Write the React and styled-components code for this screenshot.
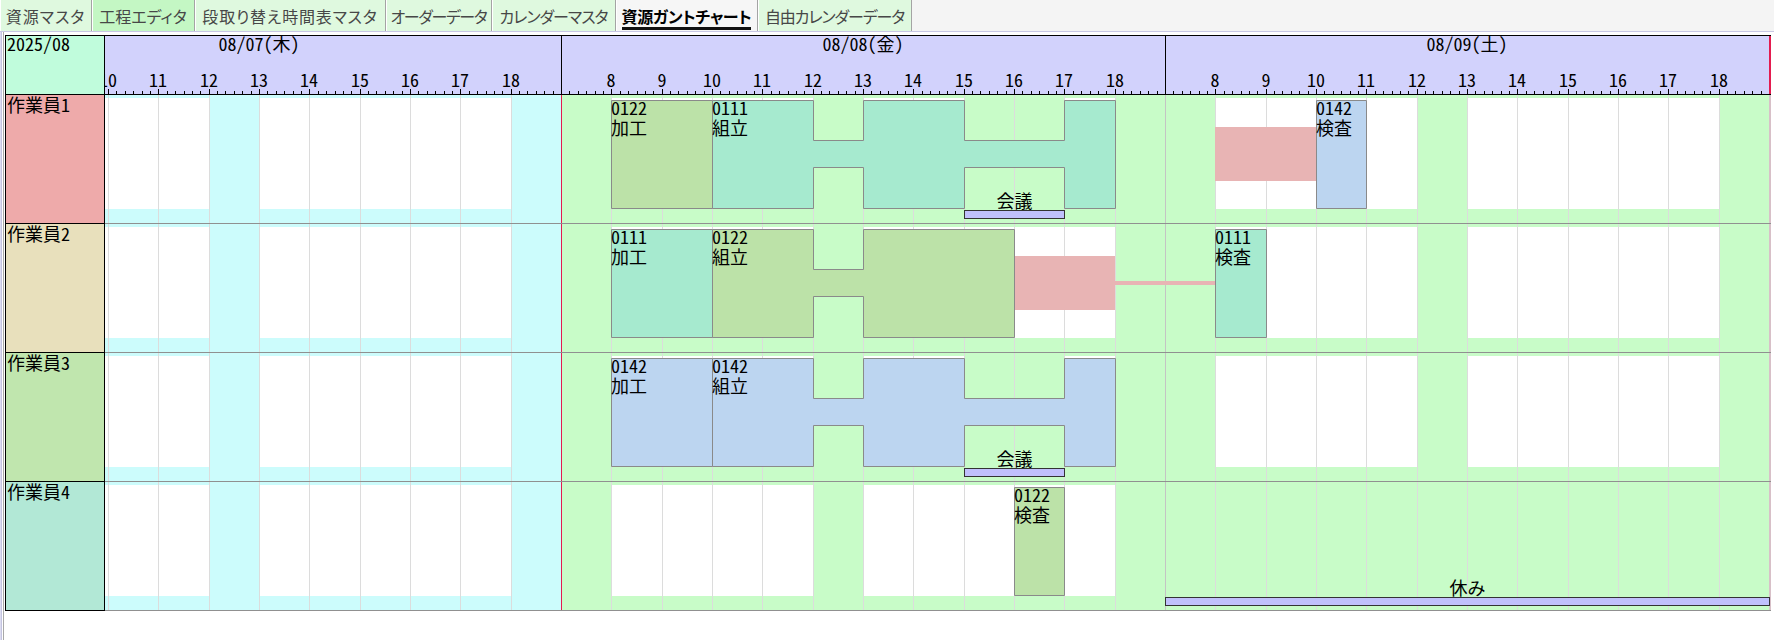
import React from 'react';
import styled, { createGlobalStyle } from 'styled-components';

const DAY_W = 604;
const X = (h) => Math.round(((h - 7) * DAY_W) / 12);
const SCROLL = 148;
const TASK_H = 109;

const C = {
  olive: '#bce2a8',
  teal: '#a6eacf',
  blue: '#bcd5f0',
  pink: '#e8b4b4',
  green: '#c8fcc8',
  cyan: '#ccfcfc',
  lav: '#d2d2fc',
  mint: '#c0fcdc',
  bar: '#c0c0fc',
  red: '#e41b4f',
};

const GlobalStyle = createGlobalStyle`
  html, body { margin: 0; padding: 0; background: #fff; }
  body {
    width: 1774px; height: 640px; overflow: hidden;
    font-family: "Noto Sans CJK JP", "Noto Sans", sans-serif;
    color: #000;
  }
  * { box-sizing: border-box; }
`;

const TabBar = styled.div`
  display: flex;
  height: 31px;
  background: #f4f4f4;
`;

const Tab = styled.div`
  width: ${(p) => p.$w}px;
  height: 31px;
  display: flex;
  align-items: center;
  justify-content: center;
  border-right: 1px solid #a4a4a4;
  box-shadow: inset 1px 0 0 #ffffff;
  background: ${(p) => (p.$tone === 'hot' ? '#c4f7c4' : p.$tone === 'sel' ? '#f6f6f6' : '#dff9df')};
  color: ${(p) => (p.$tone === 'sel' ? '#000' : '#474747')};
  font-size: 16px;
  font-feature-settings: "palt";
  letter-spacing: ${(p) => p.$ls || 0}px;
  font-weight: ${(p) => (p.$tone === 'sel' ? 700 : 400)};
  white-space: nowrap;
  overflow: hidden;
`;

const TabLabel = styled.span`
  line-height: 18px;
  padding-top: ${(p) => (p.$sel ? 5 : 0)}px;
  padding-bottom: ${(p) => (p.$sel ? 2 : 0)}px;
  border-bottom: ${(p) => (p.$sel ? '3px solid #111' : 'none')};
`;

const Panel = styled.div`
  border-top: 1px solid #c8c8e4;
  padding: 3px 0 0 5px;
  height: 609px;
  box-shadow: inset 1px 0 0 #dcdcf0, inset 2px 0 0 #c4c4e0, inset 3px 0 0 #ffffff, inset 4px 0 0 #a8a8a8;
`;

const Chart = styled.div`
  display: flex;
  width: 1766px;
  border-top: 1px solid #000;
  font-size: 18px;
  font-feature-settings: "hwid";
`;

const LeftCol = styled.div`
  width: 100px;
  display: flex;
  flex-direction: column;
  border-left: 1px solid #000;
  border-right: 1px solid #000;
`;

const CornerCell = styled.div`
  height: 59px;
  background: ${C.mint};
  border-bottom: 1px solid #000;
  line-height: 14px;
  padding-left: 1px;
`;

const RowHead = styled.div`
  height: 129px;
  background: ${(p) => p.$bg};
  border-bottom: 1px solid #000;
  line-height: 18px;
  padding-left: 1px;
`;

const Viewport = styled.div`
  width: 1666px;
  overflow: hidden;
`;

const Track = styled.div`
  display: flex;
  flex-direction: column;
  width: ${DAY_W * 3 + 2}px;
`;

const HeaderRow = styled.div`
  display: flex;
  height: 59px;
  background: ${C.lav};
  border-bottom: 1px solid #000;
`;

const DayHead = styled.div`
  width: ${DAY_W}px;
  display: flex;
  flex-direction: column;
  box-shadow: inset 1px 0 0 #000;
`;

const DateLabel = styled.div`
  height: 14px;
  line-height: 14px;
  text-align: center;
`;

const HourRow = styled.div`
  position: relative;
  height: 14px;
  margin-top: 22px;
`;

const HourLabel = styled.span`
  position: absolute;
  top: 0;
  line-height: 14px;
  transform: translateX(-50%);
  white-space: nowrap;
`;

const Ruler = styled.svg`
  display: block;
  margin-top: 3px;
`;

const EndCap = styled.div`
  width: 2px;
  background: ${(p) => p.$color};
`;

const TimelineRow = styled.div`
  display: flex;
  height: 129px;
  border-bottom: 1px solid #909090;
`;

const DayCell = styled.div`
  position: relative;
  width: ${DAY_W}px;
  height: 128px;
  background: ${(p) => p.$bg};
  box-shadow: inset 1px 0 0 ${(p) => p.$edge};
`;

const Work = styled.div`
  position: absolute;
  top: 3px;
  height: 111px;
  background: #fff;
`;

const GridLine = styled.div`
  position: absolute;
  top: 0;
  bottom: 0;
  width: 1px;
  background: #dcdcdc;
`;

const Gap = styled.div`
  position: absolute;
  top: 32px;
  height: 54px;
  background: ${C.pink};
`;

const Link = styled.div`
  position: absolute;
  top: 57px;
  height: 4px;
  background: ${C.pink};
`;

const TaskBox = styled.div`
  position: absolute;
  top: 5px;
  height: ${TASK_H}px;
`;

const TaskShape = styled.svg`
  position: absolute;
  left: 0;
  top: 0;
  display: block;
`;

const TaskText = styled.div`
  position: absolute;
  left: 0;
  top: -3px;
  line-height: 20px;
  white-space: nowrap;
`;

const Bar = styled.div`
  position: absolute;
  top: 115px;
  height: 9px;
  background: ${C.bar};
  border: 1px solid #333;
`;

const BarLabel = styled.div`
  position: absolute;
  left: 0;
  right: 0;
  bottom: 100%;
  margin-bottom: 1px;
  line-height: 20px;
  text-align: center;
  white-space: nowrap;
`;

const tabs = [
  { label: '資源マスタ', w: 92, ls: 1 },
  { label: '工程エディタ', w: 103, tone: 'hot' },
  { label: '段取り替え時間表マスタ', w: 191, ls: 0.8 },
  { label: 'オーダーデータ', w: 106, ls: -1.4 },
  { label: 'カレンダーマスタ', w: 124, ls: -1 },
  { label: '資源ガントチャート', w: 142, tone: 'sel', ls: -0.3 },
  { label: '自由カレンダーデータ', w: 154, ls: -1.1 },
];

const days = [
  { label: '08/07(木)', bg: C.cyan, edge: '#000' },
  { label: '08/08(金)', bg: C.green, edge: C.red },
  { label: '08/09(土)', bg: C.green, edge: '#c4c4c4' },
];

const FULL_H = [[10, 12, 1], [12, 13, 0], [13, 15, 1], [15, 17, 0], [17, 18, 1]];
const STD = [[8, 12], [13, 18]];
const MEET = [[8, 12], [13, 15], [17, 18]];

const rows = [
  {
    name: '作業員1',
    bg: '#eeaaaa',
    days: [
      { work: STD },
      {
        work: MEET,
        tasks: [
          { id: '0122', op: '加工', color: C.olive, segs: [[8, 10, 1]] },
          { id: '0111', op: '組立', color: C.teal, segs: FULL_H },
        ],
        bars: [{ a: 15, b: 17, label: '会議' }],
      },
      {
        work: STD,
        gaps: [[8, 10]],
        tasks: [{ id: '0142', op: '検査', color: C.blue, segs: [[10, 11, 1]] }],
      },
    ],
  },
  {
    name: '作業員2',
    bg: '#e8e0bc',
    days: [
      { work: STD },
      {
        work: STD,
        gaps: [[16, 18]],
        links: [[X(18), DAY_W - X(18)]],
        tasks: [
          { id: '0111', op: '加工', color: C.teal, segs: [[8, 10, 1]] },
          { id: '0122', op: '組立', color: C.olive, segs: [[10, 12, 1], [12, 13, 0], [13, 16, 1]] },
        ],
      },
      {
        work: STD,
        links: [[0, X(8)]],
        tasks: [{ id: '0111', op: '検査', color: C.teal, segs: [[8, 9, 1]] }],
      },
    ],
  },
  {
    name: '作業員3',
    bg: '#c0e6ae',
    days: [
      { work: STD },
      {
        work: MEET,
        tasks: [
          { id: '0142', op: '加工', color: C.blue, segs: [[8, 10, 1]] },
          { id: '0142', op: '組立', color: C.blue, segs: FULL_H },
        ],
        bars: [{ a: 15, b: 17, label: '会議' }],
      },
      { work: STD },
    ],
  },
  {
    name: '作業員4',
    bg: '#b2e8d6',
    days: [
      { work: STD },
      {
        work: STD,
        tasks: [{ id: '0122', op: '検査', color: C.olive, segs: [[16, 17, 1]] }],
      },
      { work: [], bars: [{ a: 7, b: 19, label: '休み' }] },
    ],
  },
];

const HOURS = [8, 9, 10, 11, 12, 13, 14, 15, 16, 17, 18];

function outline(segs) {
  const a = segs[0][0];
  const top = (f) => (f ? 0.5 : 40.5);
  const bot = (f) => (f ? TASK_H - 0.5 : 67.5);
  const pts = [];
  segs.forEach(([f, t, full]) => {
    pts.push([X(f) - X(a) + 0.5, top(full)], [X(t) - X(a) + 0.5, top(full)]);
  });
  [...segs].reverse().forEach(([f, t, full]) => {
    pts.push([X(t) - X(a) + 0.5, bot(full)], [X(f) - X(a) + 0.5, bot(full)]);
  });
  return pts.map((p) => p.join(',')).join(' ');
}

function RulerTicks() {
  const ticks = [];
  for (let k = 1; k < 72; k += 1) {
    const x = Math.round((k * DAY_W) / 72) + 0.5;
    ticks.push(<line key={k} x1={x} x2={x} y1={k % 6 === 0 ? 0 : 2} y2={5} stroke="#000" strokeWidth="1" />);
  }
  return (
    <Ruler width={DAY_W} height={5} viewBox={`0 0 ${DAY_W} 5`}>
      {ticks}
    </Ruler>
  );
}

function Task({ task }) {
  const a = task.segs[0][0];
  const b = task.segs[task.segs.length - 1][1];
  const w = X(b) - X(a) + 1;
  return (
    <TaskBox style={{ left: X(a), width: w }}>
      <TaskShape width={w} height={TASK_H}>
        <polygon points={outline(task.segs)} fill={task.color} stroke="#8a8a8a" strokeWidth="1" />
      </TaskShape>
      <TaskText>
        {task.id}
        <br />
        {task.op}
      </TaskText>
    </TaskBox>
  );
}

function Day({ day, info }) {
  return (
    <DayCell $bg={info.bg} $edge={info.edge}>
      {(day.work || []).map(([a, b]) => (
        <Work key={`w${a}`} style={{ left: X(a), width: X(b) - X(a) }} />
      ))}
      {HOURS.map((h) => (
        <GridLine key={`g${h}`} style={{ left: X(h) }} />
      ))}
      {(day.gaps || []).map(([a, b]) => (
        <Gap key={`p${a}`} style={{ left: X(a), width: X(b) - X(a) }} />
      ))}
      {(day.links || []).map(([l, w]) => (
        <Link key={`l${l}`} style={{ left: l, width: w }} />
      ))}
      {(day.tasks || []).map((t, i) => (
        <Task key={`t${i}`} task={t} />
      ))}
      {(day.bars || []).map((bar) => (
        <Bar key={`b${bar.a}`} style={{ left: X(bar.a), width: X(bar.b) - X(bar.a) + 1 }}>
          <BarLabel>{bar.label}</BarLabel>
        </Bar>
      ))}
    </DayCell>
  );
}

export default function App() {
  return (
    <>
      <GlobalStyle />
      <TabBar>
        {tabs.map((t) => (
          <Tab key={t.label} $w={t.w} $tone={t.tone} $ls={t.ls}>
            <TabLabel $sel={t.tone === 'sel'}>{t.label}</TabLabel>
          </Tab>
        ))}
      </TabBar>
      <Panel>
        <Chart>
          <LeftCol>
            <CornerCell>2025/08</CornerCell>
            {rows.map((r) => (
              <RowHead key={r.name} $bg={r.bg}>
                {r.name}
              </RowHead>
            ))}
          </LeftCol>
          <Viewport>
            <Track style={{ marginLeft: -SCROLL }}>
              <HeaderRow>
                {days.map((d) => (
                  <DayHead key={d.label}>
                    <DateLabel>{d.label}</DateLabel>
                    <HourRow>
                      {HOURS.map((h) => (
                        <HourLabel key={h} style={{ left: X(h) }}>
                          {h}
                        </HourLabel>
                      ))}
                    </HourRow>
                    <RulerTicks />
                  </DayHead>
                ))}
                <EndCap $color={C.red} />
              </HeaderRow>
              {rows.map((r) => (
                <TimelineRow key={r.name}>
                  {r.days.map((d, i) => (
                    <Day key={i} day={d} info={days[i]} />
                  ))}
                  <EndCap $color="#d8c0c8" />
                </TimelineRow>
              ))}
            </Track>
          </Viewport>
        </Chart>
      </Panel>
    </>
  );
}
